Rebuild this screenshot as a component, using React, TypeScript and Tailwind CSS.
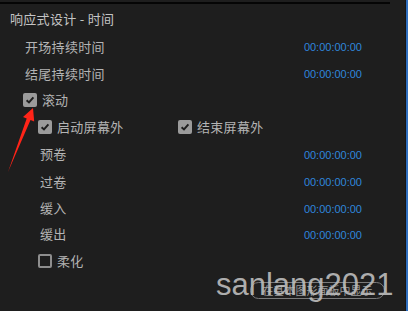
import React from "react";

const cjk = { fontFamily: '"Noto Sans CJK SC", "Noto Sans", sans-serif' };
const tcFont = { fontFamily: '"Liberation Sans", Arial, sans-serif' };

const Timecode = () => (
  <span className="text-[11px] text-[#2f86dc] pt-[2px]" style={tcFont}>
    00:00:00:00
  </span>
);

const Check = ({ checked }: { checked: boolean }) =>
  checked ? (
    <span className="flex h-[14px] w-[14px] items-center justify-center rounded-[2px] bg-[#9b9b9b]">
      <svg width="10" height="10" viewBox="0 0 10 10">
        <path d="M1.6 5.2 L4 7.4 L8.4 2.4" fill="none" stroke="#1e1e1e" strokeWidth="2" />
      </svg>
    </span>
  ) : (
    <span className="h-[14px] w-[14px] rounded-[2px] border-2 border-[#8e8e8e]" />
  );

const Row = ({ label, h, pl, time = true }: { label: string; h: string; pl: string; time?: boolean }) => (
  <div className={`flex items-center justify-between pr-[43px] ${h} ${pl}`}>
    <span className="text-[13px] tracking-[0.3px] text-[#b4b4b4]">{label}</span>
    {time && <Timecode />}
  </div>
);

export default function App() {
  return (
    <div className="relative flex h-[311px] w-[408px] overflow-hidden bg-[#1e1e1e]" style={cjk}>
      <div className="flex flex-1 flex-col">
        <div className="mt-[2px] h-[2px] w-[390px] bg-[#050505]" />
        <div className="flex h-[29px] items-center pl-[10px] text-[13px] tracking-[0.3px] text-[#c4c4c4]">响应式设计 - 时间</div>
        <Row label="开场持续时间" h="h-[27px]" pl="pl-[25px]" />
        <Row label="结尾持续时间" h="h-[27px]" pl="pl-[25px]" />
        <div className="flex h-[26px] items-center gap-[5px] pl-[23px]">
          <Check checked />
          <span className="text-[13px] text-[#b4b4b4]">滚动</span>
        </div>
        <div className="flex h-[27px] items-center pl-[38px]">
          <div className="flex w-[140px] items-center gap-[5px]">
            <Check checked />
            <span className="text-[13px] tracking-[0.3px] text-[#b4b4b4]">启动屏幕外</span>
          </div>
          <div className="flex items-center gap-[5px]">
            <Check checked />
            <span className="text-[13px] tracking-[0.3px] text-[#b4b4b4]">结束屏幕外</span>
          </div>
        </div>
        <Row label="预卷" h="h-[28px]" pl="pl-[40px]" />
        <Row label="过卷" h="h-[27px]" pl="pl-[40px]" />
        <Row label="缓入" h="h-[26px]" pl="pl-[40px]" />
        <Row label="缓出" h="h-[26px]" pl="pl-[40px]" />
        <div className="flex h-[27px] items-center gap-[5px] pl-[38px]">
          <Check checked={false} />
          <span className="text-[13px] tracking-[0.3px] text-[#b4b4b4]">柔化</span>
        </div>
        <div className="flex justify-end pr-[20px] pt-[8px]">
          <span className="flex h-[17px] w-[135px] items-center justify-center rounded-full border border-[#7a7a7a] text-[11px] text-[#9a9a9a]">
            在基本图形面板中显示
          </span>
        </div>
      </div>
      <div className="w-[1px] bg-[#161616]" />
      <div className="w-[2px] bg-[#2f6fc0]" />

      <div
        className="pointer-events-none absolute left-[216px] top-[269px] text-[31px] leading-none text-[#bdbdbd] opacity-90"
        style={tcFont}
      >
        sanlang2021
      </div>

      <svg className="pointer-events-none absolute inset-0" width="408" height="311">
        <polygon
          points="33,108 23,117 26.7,118.5 8,172 30.5,120 34.2,121.4"
          fill="#ff2418"
        />
      </svg>
    </div>
  );
}
